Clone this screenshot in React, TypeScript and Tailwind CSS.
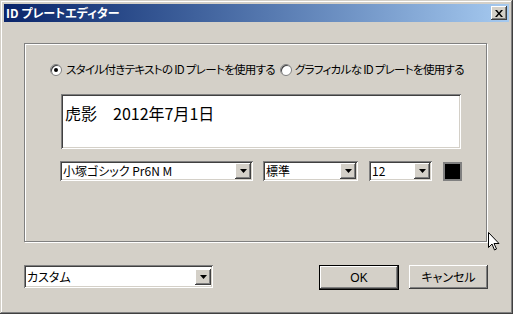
import React from 'react';

const jp = "font-['Noto_Sans_CJK_JP','Noto_Sans',sans-serif] [font-feature-settings:'palt']";

const raised =
  'bg-[#d4d0c8] shadow-[inset_-1px_-1px_#404040,inset_1px_1px_#ffffff,inset_-2px_-2px_#808080,inset_2px_2px_#d4d0c8]';
const sunken =
  'bg-white shadow-[inset_1px_1px_#808080,inset_-1px_-1px_#ffffff,inset_2px_2px_#404040,inset_-2px_-2px_#d4d0c8]';

const Arrow = () => (
  <div className={`w-[16px] h-[16px] flex items-center justify-center ${raised}`}>
    <svg width="7" height="4" viewBox="0 0 7 4">
      <path d="M0 0h7L3.5 4z" fill="#000" />
    </svg>
  </div>
);

const Combo = ({ text, w, h = 20 }: { text: string; w: number; h?: number }) => (
  <div
    className={`flex items-center justify-between pl-[3px] pr-[2px] ${sunken}`}
    style={{ width: w, height: h }}
  >
    <span className="text-[12px] leading-none text-black whitespace-nowrap">{text}</span>
    <Arrow />
  </div>
);

const Radio = ({ checked }: { checked?: boolean }) => (
  <div className="w-[12px] h-[12px] shrink-0 rounded-full bg-white border border-[#808080] shadow-[inset_1px_1px_#404040] flex items-center justify-center">
    {checked && <div className="w-[4px] h-[4px] rounded-full bg-black" />}
  </div>
);

export default function App() {
  return (
    <div
      className={`relative w-[513px] h-[314px] bg-[#d4d0c8] p-[4px] flex flex-col overflow-hidden shadow-[inset_-1px_-1px_#404040,inset_1px_1px_#d4d0c8,inset_-2px_-2px_#808080,inset_2px_2px_#ffffff] ${jp}`}
    >
      {/* title bar */}
      <div className="h-[18px] flex items-center justify-between pl-[2px] pr-[2px] bg-gradient-to-r from-[#0a246a] to-[#a6caf0]">
        <span className="text-white text-[12px] font-bold leading-none">ID プレートエディター</span>
        <div className={`w-[16px] h-[14px] flex items-center justify-center ${raised}`}>
          <svg width="8" height="7" viewBox="0 0 8 7">
            <path d="M0 0h2l2 2.5L6 0h2L5 3.5 8 7H6L4 4.5 2 7H0l3-3.5z" fill="#000" />
          </svg>
        </div>
      </div>

      {/* group box */}
      <div className="ml-[20px] mt-[21px] w-[463px] h-[199px] border border-[#808080] shadow-[1px_1px_0_#ffffff,inset_1px_1px_0_#ffffff] flex flex-col">
        <div className="mt-[20px] ml-[25px] flex items-center h-[12px] text-[11.5px] text-black whitespace-nowrap">
          <Radio checked />
          <span className="ml-[4px] leading-none tracking-[-0.7px]">スタイル付きテキストの ID プレートを使用する</span>
          <div className="ml-[5px]">
            <Radio />
          </div>
          <span className="ml-[3px] leading-none tracking-[-0.7px]">グラフィカルな ID プレートを使用する</span>
        </div>

        <div className={`ml-[36px] mt-[18px] w-[400px] h-[55px] pl-[4px] pt-[7px] ${sunken}`}>
          <span className="text-[16px] leading-none text-black">虎影　2012年7月1日</span>
        </div>

        <div className="ml-[35px] mt-[12px] flex items-center">
          <Combo text="小塚ゴシック Pr6N M" w={193} />
          <div className="ml-[10px]">
            <Combo text="標準" w={95} />
          </div>
          <div className="ml-[11px]">
            <Combo text="12" w={63} />
          </div>
          <div className="ml-[11px] w-[19px] h-[19px] bg-black border-2 border-[#808080] shadow-[0_0_0_1px_#d4d0c8]" />
        </div>
      </div>

      {/* bottom row */}
      <div className="mt-[23px] ml-[20px] flex items-start">
        <Combo text="カスタム" w={189} h={23} />
        <div className="ml-[106px] w-[80px] h-[25px] border border-black flex items-center justify-center">
          <div className={`w-full h-full flex items-center justify-center text-[12px] text-black ${raised}`}>
            <span className="font-['Liberation_Sans',sans-serif]">OK</span>
          </div>
        </div>
        <div className={`ml-[10px] w-[79px] h-[24px] flex items-center justify-center text-[12px] text-black ${raised}`}>
          キャンセル
        </div>
      </div>

      {/* mouse cursor */}
      <svg className="absolute left-[488px] top-[232px]" width="12" height="19" viewBox="0 0 12 19">
        <path d="M0.5 0.5v15l3.5-3.5 2.5 6 2-1-2.5-5.5h5z" fill="#fff" stroke="#000" strokeWidth="1" />
      </svg>
    </div>
  );
}
